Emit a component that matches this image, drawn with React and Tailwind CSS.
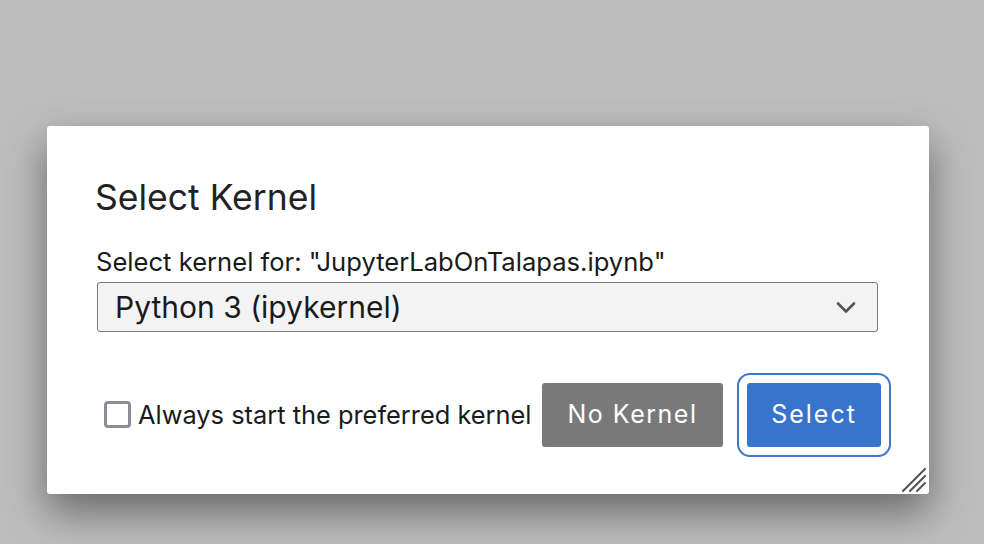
import { useState } from "react";

function Chevron() {
  return (
    <svg width="20" height="13" viewBox="0 0 20 13" fill="none">
      <path d="M2 2.5 L10 10.5 L18 2.5" stroke="#555" strokeWidth="2.6" strokeLinecap="round" strokeLinejoin="round" />
    </svg>
  );
}

function ResizeHandle() {
  return (
    <svg className="absolute right-[2px] bottom-[1px]" width="26" height="26" viewBox="0 0 26 26">
      <g stroke="#555" strokeWidth="2.2" strokeLinecap="round">
        <line x1="2" y1="24" x2="24" y2="2" />
        <line x1="9" y1="24" x2="24" y2="9" />
        <line x1="16" y1="24" x2="24" y2="16" />
      </g>
    </svg>
  );
}

export default function App() {
  const [always, setAlways] = useState(false);

  return (
    <div className="w-[984px] h-[544px] bg-[#bdbdbd] pt-[126px] pl-[47px] overflow-hidden" style={{ fontFamily: "Inter, 'Liberation Sans', sans-serif" }}>
      <div className="relative w-[882px] h-[368px] bg-white rounded-[3px] shadow-[0_18px_40px_rgba(0,0,0,0.45)] pt-[50px] px-[50px]">
        {/* Header */}
        <h1 className="text-[35.5px] leading-[44px] text-[#222] -ml-[2px]">Select Kernel</h1>

        {/* Body */}
        <div className="mt-[27px] text-[25.6px] leading-[30px] text-[#1a1a1a] -ml-[1px]">
          Select kernel for: "JupyterLabOnTalapas.ipynb"
        </div>
        <div className="mt-[5px] h-[50px] w-[781px] flex items-center justify-between border-[1.5px] border-[#7a7a7a] rounded-[3px] bg-[#f3f3f3] pl-[17px] pr-[21px]">
          <span className="text-[30px] text-[#1a1a1a]">Python 3 (ipykernel)</span>
          <Chevron />
        </div>

        {/* Footer */}
        <div className="mt-[51px] flex items-center h-[64px] -mr-[2px]">
          <label className="flex items-center gap-[7px] ml-[7px] cursor-pointer">
            <span
              onClick={() => setAlways(!always)}
              className="w-[27px] h-[27px] border-[3px] border-[#8d8d99] rounded-[4px] bg-white"
            />
            <span className="text-[25.4px] text-[#1a1a1a]">Always start the preferred kernel</span>
          </label>
          <div className="ml-auto flex items-center gap-[24px]">
            <button className="w-[181px] h-[64px] bg-[#797979] text-white rounded-[3px] text-[25px] tracking-[1.5px]">
              No Kernel
            </button>
            <button className="w-[134px] h-[64px] bg-[#3874cc] text-white rounded-[3px] text-[25px] tracking-[2px] outline-2 outline-[#3b78d0] outline-offset-[8px]">
              Select
            </button>
          </div>
        </div>

        <ResizeHandle />
      </div>
    </div>
  );
}
